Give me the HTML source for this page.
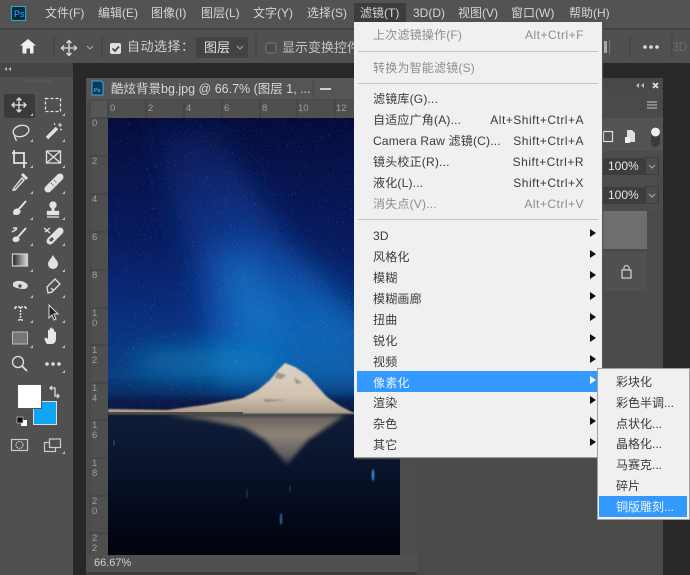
<!DOCTYPE html>
<html><head><meta charset="utf-8"><style>
html,body{margin:0;padding:0;background:#282828}
#w{width:690px;height:575px;overflow:hidden;position:relative;background:#4a4a4a;font-family:"Liberation Sans","Noto Sans CJK SC",sans-serif;font-size:12px;filter:blur(.35px)}
#w div{position:absolute}
.t{position:absolute;white-space:nowrap;line-height:16px;height:16px}
.m{color:#d6d6d6;top:5px;font-size:12px}
.i{color:#3a3a3a;left:373px;letter-spacing:.2px}
.s{color:#3a3a3a;right:106px;letter-spacing:.5px}
.d{color:#8d8d8d}
.u{color:#3a3a3a;left:616px}
.sep{left:358px;width:240px;height:1px;background:#c4c4c4}
.ar{left:590px;width:0;height:0;border-left:6px solid #111;border-top:4.5px solid transparent;border-bottom:4.5px solid transparent}
svg{position:absolute;left:0;top:0}
.rn{color:#a0a0a0;font-size:9.5px;line-height:10px;position:absolute}
</style></head><body><div id="w">
<!-- chrome -->
<div style="left:0;top:0;width:690px;height:28px;background:#535353"></div>
<div style="left:0;top:28px;width:690px;height:2px;background:#434343"></div>
<div style="left:0;top:30px;width:690px;height:33px;background:#505050"></div>
<div style="left:0;top:63px;width:690px;height:512px;background:#282828"></div>
<div style="left:0;top:63px;width:73px;height:512px;background:#505050"></div>
<div style="left:0;top:63px;width:73px;height:14px;background:#454545"></div>
<div style="left:73px;top:63px;width:13px;height:512px;background:#282828"></div>
<!-- workspace -->
<div style="left:417px;top:78px;width:246px;height:497px;background:#4a4a4a"></div>
<div style="left:86px;top:78px;width:331px;height:494px;background:#4e4e4e;border-right:1px solid #3a3a3a;box-sizing:border-box"></div>
<div style="left:86px;top:572px;width:331px;height:3px;background:#3e3e3e"></div>
<div style="left:87px;top:78px;width:330px;height:22px;background:#555"></div>
<div style="left:90px;top:100px;width:327px;height:18px;background:#4f4f4f"></div>
<div style="left:90px;top:100px;width:18px;height:18px;background:#565656"></div>
<div style="left:90px;top:118px;width:18px;height:437px;background:#4f4f4f"></div>
<div style="left:400px;top:100px;width:17px;height:455px;background:#4d4d4d"></div>
<div style="left:87px;top:555px;width:330px;height:17px;background:#505050"></div>
<div class="t" style="left:94px;top:555px;color:#d0d0d0;font-size:11px">66.67%</div>

<!-- image -->
<svg width="690" height="575" viewBox="0 0 690 575">
<defs>
<linearGradient id="sky" gradientUnits="userSpaceOnUse" x1="0" y1="118" x2="0" y2="414"><stop offset="0" stop-color="#050c3c"/><stop offset=".4" stop-color="#071a5e"/><stop offset=".7" stop-color="#0a3080"/><stop offset=".87" stop-color="#0a3f80"/><stop offset="1" stop-color="#061a48"/></linearGradient>
<linearGradient id="wat" gradientUnits="userSpaceOnUse" x1="0" y1="414" x2="0" y2="555"><stop offset="0" stop-color="#101d38"/><stop offset=".35" stop-color="#0a152c"/><stop offset=".7" stop-color="#040a1b"/><stop offset="1" stop-color="#01030c"/></linearGradient>
<linearGradient id="mw" gradientUnits="userSpaceOnUse" x1="170" y1="140" x2="320" y2="370"><stop offset="0" stop-color="#1a3fa0" stop-opacity=".2"/><stop offset=".45" stop-color="#1a58c0" stop-opacity=".5"/><stop offset=".8" stop-color="#1478cf" stop-opacity=".7"/><stop offset="1" stop-color="#1478cf" stop-opacity=".5"/></linearGradient>
<linearGradient id="mt" gradientUnits="userSpaceOnUse" x1="0" y1="362" x2="0" y2="414"><stop offset="0" stop-color="#dcd2c5"/><stop offset=".65" stop-color="#d2c3b0"/><stop offset="1" stop-color="#a89a86"/></linearGradient>
<linearGradient id="rf" gradientUnits="userSpaceOnUse" x1="0" y1="414" x2="0" y2="466"><stop offset="0" stop-color="#6f675f"/><stop offset=".4" stop-color="#9c8f80"/><stop offset=".8" stop-color="#6a6664"/><stop offset="1" stop-color="#2c3140"/></linearGradient>
<filter id="b8" x="-40%" y="-40%" width="180%" height="180%"><feGaussianBlur stdDeviation="15"/></filter>
<filter id="b14" x="-40%" y="-80%" width="180%" height="260%"><feGaussianBlur stdDeviation="13"/></filter>
<filter id="b1" x="-20%" y="-20%" width="140%" height="140%"><feGaussianBlur stdDeviation=".7"/></filter>
<filter id="b2" x="-20%" y="-20%" width="140%" height="140%"><feGaussianBlur stdDeviation="2"/></filter>
<filter id="star" x="0" y="0" width="100%" height="100%"><feTurbulence type="fractalNoise" baseFrequency=".9" numOctaves="2" seed="4"/><feColorMatrix values="0 0 0 0 .6  0 0 0 0 .72  0 0 0 0 1  3 3 0 0 -3.8"/></filter>
<clipPath id="c"><rect x="108" y="118" width="292" height="437"/></clipPath>
</defs>
<g clip-path="url(#c)">
<rect x="108" y="118" width="292" height="296" fill="url(#sky)"/>
<path d="M150 130L215 130L285 240L370 330L370 395L220 385L195 270Z" fill="url(#mw)" filter="url(#b8)"/>
<path d="M215 255L250 250L285 320L270 345L235 320Z" fill="#1b8ad8" opacity=".45" filter="url(#b8)"/>
<ellipse cx="210" cy="362" rx="80" ry="14" fill="#0f86c4" opacity=".7" filter="url(#b14)"/>
<ellipse cx="340" cy="345" rx="55" ry="28" fill="#0f6cb8" opacity=".5" filter="url(#b14)"/>
<rect x="108" y="398" width="292" height="16" fill="#08183f" opacity=".7" filter="url(#b2)"/>
<rect x="108" y="118" width="292" height="290" filter="url(#star)" opacity=".5"/>
<rect x="108" y="414" width="292" height="141" fill="url(#wat)"/>
<path d="M165 415L345 415L332 424L308 440L294 456L287 465L280 456L265 440L245 428L205 420Z" fill="url(#rf)" filter="url(#b2)" opacity=".9"/>
<path d="M108 409L167 410L205 405L243 398L258 390L270 380L278 370L285 363L295 367L307 375L317 386L327 397L340 406L352 412L360 414L108 414Z" fill="url(#mt)" filter="url(#b1)"/>
<path d="M277 372L286 375L282 379L275 378ZM263 399L286 400L265 402ZM294 377L302 383L296 384Z" fill="#76695a" opacity=".55" filter="url(#b1)"/>
<rect x="108" y="412" width="135" height="2" fill="#3a3426" opacity=".75"/>
<rect x="243" y="413" width="157" height="1" fill="#6f6555" opacity=".7"/>
<ellipse cx="373" cy="475" rx="1.300" ry="6" fill="#3a89d8" filter="url(#b1)"/>
<ellipse cx="281" cy="519" rx="1.200" ry="6" fill="#2a66a8" filter="url(#b1)"/>
<ellipse cx="247" cy="494" rx="1" ry="5" fill="#1e4a78" opacity=".5"/>
<ellipse cx="290" cy="489" rx="1" ry="4" fill="#1e4a78" opacity=".5"/>
<ellipse cx="114" cy="443" rx="1" ry="3" fill="#2a5a8a" opacity=".6"/>
</g>

<!-- ruler ticks -->
<g stroke="#3f3f3f" fill="none">
<path d="M108 100V118M146 100V118M184 100V118M222 100V118M260 100V118M297 100V118M335 100V118M373 100V118"/>
<path d="M90 118H108M90 156H108M90 194H108M90 232H108M90 270H108M90 308H108M90 345H108M90 383H108M90 420H108M90 458H108M90 496H108M90 533H108"/>
<path d="M90 100H417M90 100V555" stroke="#444"/>
</g>
<!-- icons: title bar -->
<rect x="11.500" y="6.500" width="14" height="14" fill="#04263f" stroke="#2aa6b8" stroke-width="1.200"/>
<text x="14" y="17" font-size="9" fill="#38b0ff" font-family="Liberation Sans">Ps</text>
<path d="M92 81h9l2 2v12h-11z" fill="#083a5e" stroke="#3fa6d8"/>
<text x="94" y="92" font-size="5.500" fill="#7fd0ff" font-family="Liberation Sans">Ps</text>
<path d="M320 89h11" stroke="#d0d0d0" stroke-width="2"/>
<path d="M313 80V98" stroke="#484848"/>
<!-- options bar -->
<path d="M20 49V45.500L28 39L36 45.500H33.500V53.500H30V48.500H26.500V53.500H22.500V45.500H20Z" fill="#eee"/>
<path d="M54 35V57M102 35V57M256 35V57M630 35V57M672 35V57" stroke="#414141"/>
<g fill="none" stroke="#ddd" stroke-width="1.300"><path d="M69 41V55M62 48H76"/><path d="M66.500 43L69 40.500L71.500 43M66.500 53L69 55.500L71.500 53M64 45.500L61.500 48L64 50.500M74 45.500L76.500 48L74 50.500"/></g>
<path d="M87 46l3 3 3-3" fill="none" stroke="#aaa"/>
<rect x="110" y="43" width="11" height="11" rx="2" fill="#e0e0e0"/>
<path d="M112.500 48.500l2.500 2.500 4-4.500" fill="none" stroke="#444" stroke-width="1.800"/>
<rect x="196" y="37" width="52" height="21" rx="2" fill="#434343"/>
<path d="M237 46l3 3 3-3" fill="none" stroke="#aaa"/>
<rect x="266" y="43" width="10" height="10" rx="2" fill="#4a4a4a" stroke="#777"/>
<circle cx="645" cy="47" r="1.800" fill="#ddd"/><circle cx="651" cy="47" r="1.800" fill="#ddd"/><circle cx="657" cy="47" r="1.800" fill="#ddd"/>
<rect x="604" y="41" width="3" height="12" fill="#aaa"/>
<path d="M609.500 40V55" stroke="#777"/>
<!-- tools panel -->
<path d="M26 81h25" stroke="#666" stroke-dasharray="1 1" stroke-width="3" opacity=".6"/>
<path d="M7 67l-2.500 2 2.500 2zM11 67l-2.500 2 2.500 2z" fill="#bbb"/>
<rect x="4" y="94" width="31" height="24" rx="2" fill="#3a3a3a"/>
<g fill="none" stroke="#e2e2e2" stroke-width="1.300">
<path d="M19 98V112M12 105H26"/><path d="M16.500 100.500L19 98L21.500 100.500M16.500 109.500L19 112L21.500 109.500M14.500 102.500L12 105L14.500 107.500M23.500 102.500L26 105L23.500 107.500"/>
<rect x="45.500" y="98.500" width="15" height="13" stroke-dasharray="3 2"/>
<!-- lasso -->
<ellipse cx="21" cy="131" rx="8" ry="5.500" transform="rotate(-15 21 131)"/><path d="M15 135c-2 2 2 4 1 6"/>
<!-- wand -->
<path d="M47 138L57 128" stroke-width="3.500"/><path d="M60 123v4M58 125h4M54 123l1 2M62 130l-2-1" stroke-width="1"/>
<!-- crop -->
<path d="M14 150V163H27M12 153H24V168" stroke-width="1.800"/>
<!-- frame -->
<rect x="46.500" y="151" width="14" height="12"/><path d="M46.500 151L60.500 163M60.500 151L46.500 163"/>
<!-- eyedropper -->
<path d="M14 188L13 190L15 190L24 180L22 178Z" stroke-width="1.400"/><path d="M22 174L27 179" stroke-width="3"/>
<!-- heal -->
<path d="M48 189L60 177" stroke-width="7" stroke-linecap="round"/>
<path d="M51 183l3 3M54 180l3 3" stroke="#505050" stroke-width="1.200" stroke-dasharray="1 1"/>
<!-- brush -->
<path d="M14 214c-1-3 1-5 4-5l2 2c0 3-3 4-6 3z" fill="#e2e2e2"/><path d="M19 209L26 201" stroke-width="2"/>
<!-- stamp -->
<circle cx="53" cy="205" r="3" fill="#e2e2e2"/><path d="M53 207V211" stroke-width="3"/><rect x="47.500" y="211.500" width="11" height="3" fill="#e2e2e2"/><path d="M47 217H59"/>
<!-- hist brush -->
<path d="M14 241c-2-2 0-4 3-4l2 2c0 2-3 3-5 2z" fill="#e2e2e2"/><path d="M18 237l8-9" stroke-width="2"/><path d="M12 232l5-3M13 228h4" stroke-width="1.500"/>
<!-- eraser -->
<path d="M50 241L60 231" stroke-width="7" stroke-linecap="round"/><path d="M50 241l3-3" stroke="#505050" stroke-width="3"/><path d="M44 228l6 5M50 228l-5 4"/>
<!-- gradient -->
<defs><linearGradient id="gr"><stop offset="0" stop-color="#222"/><stop offset="1" stop-color="#ddd"/></linearGradient></defs>
<rect x="12.500" y="254" width="15" height="12" fill="url(#gr)" stroke="#ccc"/>
<!-- drop -->
<path d="M53 255c2 4 5 6 5 9a5 5 0 0 1-10 0c0-3 3-5 5-9z" fill="#e2e2e2" stroke="none"/>
<!-- dodge / smudge -->
<path d="M13 283c3-3 10-3 14 1 2 2 0 5-3 5-3 0-9-1-11-3z" fill="#ddd" stroke="none"/><circle cx="20" cy="286" r="1.800" fill="#505050" stroke="none"/>
<!-- pen -->
<path d="M48 293L47 287L55 279L60 284L52 292ZM51 288l2 2"/>
<!-- type -->
<path d="M15 307H26M15 307V310M26 307V310M20.500 307V320M18 320H23" stroke-dasharray="2 1" stroke-width="1.500"/>
</g>
<path d="M49 305V318L52 315L54 320L56 319L54 314L58 314Z" fill="#222" stroke="#ddd"/>
<rect x="12.500" y="332" width="15" height="12" fill="#777" stroke="#bbb"/>
<path d="M47 344c-2-3-3-5-2-6 1-1 2 0 3 1V331c0-2 2-2 2 0v-2c0-2 2-2 2 0v1c0-2 2-2 2 0v2c0-1 2-1 2 1v6c0 3-2 5-4 5h-3c-1 0-1 0-2 0z" fill="#e6e6e6"/>
<g fill="none" stroke="#e2e2e2" stroke-width="1.300"><circle cx="18" cy="362" r="5.500"/><path d="M22 366L27 371" stroke-width="1.800"/></g>
<circle cx="47" cy="364" r="1.800" fill="#ddd"/><circle cx="53" cy="364" r="1.800" fill="#ddd"/><circle cx="59" cy="364" r="1.800" fill="#ddd"/>
<!-- small triangles -->
<g fill="#bbb"><path d="M33 113l-3 3h3zM65 113l-3 3h3zM33 139l-3 3h3zM65 139l-3 3h3zM33 165l-3 3h3zM65 165l-3 3h3zM33 191l-3 3h3zM65 191l-3 3h3zM33 217l-3 3h3zM65 217l-3 3h3zM33 243l-3 3h3zM65 243l-3 3h3zM33 269l-3 3h3zM65 269l-3 3h3zM33 295l-3 3h3zM65 295l-3 3h3zM33 320l-3 3h3zM65 320l-3 3h3zM33 345l-3 3h3zM65 345l-3 3h3zM65 370l-3 3h3zM65 451l-3 3h3z"/></g>
<!-- colors -->
<rect x="33.500" y="401.500" width="23" height="23" fill="#11a5f5" stroke="#ddd"/>
<rect x="17.500" y="384.500" width="24" height="24" fill="#fff" stroke="#555"/>
<path d="M50 388h5v8h4M52 386l-2 2 2 2M57 394l2 2-2 2" fill="none" stroke="#ddd" stroke-width="1.300"/>
<rect x="21" y="420" width="6" height="6" fill="#fff"/><rect x="17" y="417" width="6" height="6" fill="#111" stroke="#ddd" stroke-width=".6"/>
<g fill="none" stroke="#ccc" stroke-width="1.200"><rect x="11.500" y="439.500" width="16" height="11"/><circle cx="19.500" cy="445" r="3.500" stroke-dasharray="1.500 1"/>
<rect x="44.500" y="442.500" width="11" height="9"/><rect x="49.500" y="439" width="11" height="8.500" fill="#505050"/></g>
</svg>

<!-- right panel -->
<div style="left:602px;top:78px;width:61px;height:12px;background:#484848;border-radius:0 3px 0 0"></div>
<div style="left:602px;top:90px;width:61px;height:28px;background:#4a4a4a"></div>
<div style="left:602px;top:118px;width:61px;height:33px;background:#535353"></div>
<div style="left:602px;top:151px;width:61px;height:60px;background:#4c4c4c"></div>
<div style="left:602px;top:211px;width:61px;height:364px;background:#4a4a4a"></div>
<div style="left:602px;top:211px;width:45px;height:38px;background:#6e6e6e"></div>
<div style="left:602px;top:252px;width:45px;height:39px;background:#505050"></div>
<div style="left:602px;top:158px;width:43px;height:17px;background:#3d3d3d"></div>
<div style="left:602px;top:187px;width:43px;height:17px;background:#3d3d3d"></div>
<div style="left:645px;top:157px;width:14px;height:18px;border:1px solid #3c3c3c;box-sizing:border-box"></div>
<div style="left:645px;top:186px;width:14px;height:18px;border:1px solid #3c3c3c;box-sizing:border-box"></div>
<div class="t" style="left:608px;top:158px;color:#e6e6e6;font-size:12px">100%</div>
<div class="t" style="left:608px;top:187px;color:#e6e6e6;font-size:12px">100%</div>
<svg width="690" height="575" viewBox="0 0 690 575">
<path d="M649 165l3 3 3-3M649 194l3 3 3-3" fill="none" stroke="#aaa"/>
<path d="M639 83l-3 2.500 3 2.500zM644 83l-3 2.500 3 2.500z" fill="#bbb"/>
<path d="M653 83l5 5M658 83l-5 5" stroke="#ddd" stroke-width="1.800"/>
<path d="M647 102h10M647 105h10M647 108h10" stroke="#888" stroke-width="2"/>
<rect x="603.500" y="131.500" width="9" height="10" fill="none" stroke="#ddd" stroke-width="1.200"/>
<path d="M627 138v-8h5l3 3v9h-8z" fill="#eee" opacity=".9"/><rect x="625" y="137" width="5" height="6" fill="#eee"/>
<rect x="651" y="127" width="9" height="20" rx="4.500" fill="#3a3a3a"/><circle cx="655.500" cy="132" r="4.500" fill="#eee"/>
<rect x="622" y="270" width="9" height="8" fill="none" stroke="#ccc" stroke-width="1.300"/><path d="M624 270v-2a2.500 2.500 0 0 1 5 0v2" fill="none" stroke="#ccc" stroke-width="1.200"/>
</svg>
<div class="t" style="left:672px;top:39px;color:#6d6d6d;font-size:12px">3D</div>

<!-- menu bar text -->
<div class="t m" style="left:45px">文件(F)</div>
<div class="t m" style="left:98px">编辑(E)</div>
<div class="t m" style="left:151px">图像(I)</div>
<div class="t m" style="left:201px">图层(L)</div>
<div class="t m" style="left:253px">文字(Y)</div>
<div class="t m" style="left:307px">选择(S)</div>
<div style="left:354px;top:3px;width:52px;height:20px;background:#3c3c3c"></div>
<div class="t m" style="left:360px">滤镜(T)</div>
<div class="t m" style="left:413px">3D(D)</div>
<div class="t m" style="left:458px">视图(V)</div>
<div class="t m" style="left:511px">窗口(W)</div>
<div class="t m" style="left:569px">帮助(H)</div>
<!-- options text -->
<div class="t" style="left:127px;top:39px;color:#d0d0d0;font-size:13px;letter-spacing:.5px">自动选择：</div>
<div class="t" style="left:204px;top:40px;color:#e0e0e0;font-size:13px">图层</div>
<div class="t" style="left:282px;top:40px;color:#c4c4c4;font-size:13px">显示变换控件</div>
<!-- doc title -->
<div class="t" style="left:111px;top:81px;color:#d8d8d8;font-size:12.500px">酷炫背景bg.jpg @ 66.7% (图层 1, ...</div>
<!-- rulers -->
<span class="rn" style="left:110px;top:104px">0</span><span class="rn" style="left:148px;top:104px">2</span><span class="rn" style="left:186px;top:104px">4</span><span class="rn" style="left:224px;top:104px">6</span><span class="rn" style="left:262px;top:104px">8</span><span class="rn" style="left:298px;top:104px">10</span><span class="rn" style="left:336px;top:104px">12</span>
<span class="rn" style="left:92px;top:119px">0</span><span class="rn" style="left:92px;top:157px">2</span><span class="rn" style="left:92px;top:195px">4</span><span class="rn" style="left:92px;top:233px">6</span><span class="rn" style="left:92px;top:271px">8</span>
<span class="rn" style="left:92px;top:309px">1<br>0</span><span class="rn" style="left:92px;top:346px">1<br>2</span><span class="rn" style="left:92px;top:384px">1<br>4</span><span class="rn" style="left:92px;top:421px">1<br>6</span><span class="rn" style="left:92px;top:459px">1<br>8</span><span class="rn" style="left:92px;top:497px">2<br>0</span><span class="rn" style="left:92px;top:534px">2<br>2</span>

<!-- filter menu -->
<div style="left:354px;top:22px;width:248px;height:436px;background:#f0f0f0;border-bottom:1px solid #999;box-sizing:border-box;box-shadow:1px 1px 1px #555"></div>
<div class="sep" style="top:51px"></div><div class="sep" style="top:83px"></div><div class="sep" style="top:219px"></div>
<div style="left:357px;top:371px;width:240px;height:21px;background:#3399ff"></div>
<div class="t i d" style="top:27px">上次滤镜操作(F)</div><div class="t s d" style="top:27px">Alt+Ctrl+F</div>
<div class="t i d" style="top:60px">转换为智能滤镜(S)</div>
<div class="t i" style="top:91px">滤镜库(G)...</div>
<div class="t i" style="top:112px">自适应广角(A)...</div><div class="t s" style="top:112px">Alt+Shift+Ctrl+A</div>
<div class="t i" style="top:133px">Camera Raw 滤镜(C)...</div><div class="t s" style="top:133px">Shift+Ctrl+A</div>
<div class="t i" style="top:154px">镜头校正(R)...</div><div class="t s" style="top:154px">Shift+Ctrl+R</div>
<div class="t i" style="top:175px">液化(L)...</div><div class="t s" style="top:175px">Shift+Ctrl+X</div>
<div class="t i d" style="top:196px">消失点(V)...</div><div class="t s d" style="top:196px">Alt+Ctrl+V</div>
<div class="t i" style="top:228px">3D</div>
<div class="t i" style="top:249px">风格化</div>
<div class="t i" style="top:270px">模糊</div>
<div class="t i" style="top:291px">模糊画廊</div>
<div class="t i" style="top:312px">扭曲</div>
<div class="t i" style="top:333px">锐化</div>
<div class="t i" style="top:354px">视频</div>
<div class="t i" style="top:375px;color:#e8f3ff">像素化</div>
<div class="t i" style="top:395px">渲染</div>
<div class="t i" style="top:416px">杂色</div>
<div class="t i" style="top:437px">其它</div>
<div class="ar" style="top:229px"></div><div class="ar" style="top:250px"></div><div class="ar" style="top:271px"></div><div class="ar" style="top:292px"></div><div class="ar" style="top:313px"></div><div class="ar" style="top:334px"></div><div class="ar" style="top:355px"></div><div class="ar" style="top:376px;border-left-color:#fff"></div><div class="ar" style="top:396px"></div><div class="ar" style="top:417px"></div><div class="ar" style="top:438px"></div>

<!-- submenu -->
<div style="left:597px;top:368px;width:93px;height:152px;background:#f0f0f0;border:1px solid #a0a0a0;box-sizing:border-box"></div>
<div style="left:599px;top:496px;width:88px;height:21px;background:#3399ff"></div>
<div class="t u" style="top:374px">彩块化</div>
<div class="t u" style="top:395px">彩色半调...</div>
<div class="t u" style="top:416px">点状化...</div>
<div class="t u" style="top:436px">晶格化...</div>
<div class="t u" style="top:457px">马赛克...</div>
<div class="t u" style="top:478px">碎片</div>
<div class="t u" style="top:499px;color:#e8f3ff">铜版雕刻...</div>
</div></body></html>
